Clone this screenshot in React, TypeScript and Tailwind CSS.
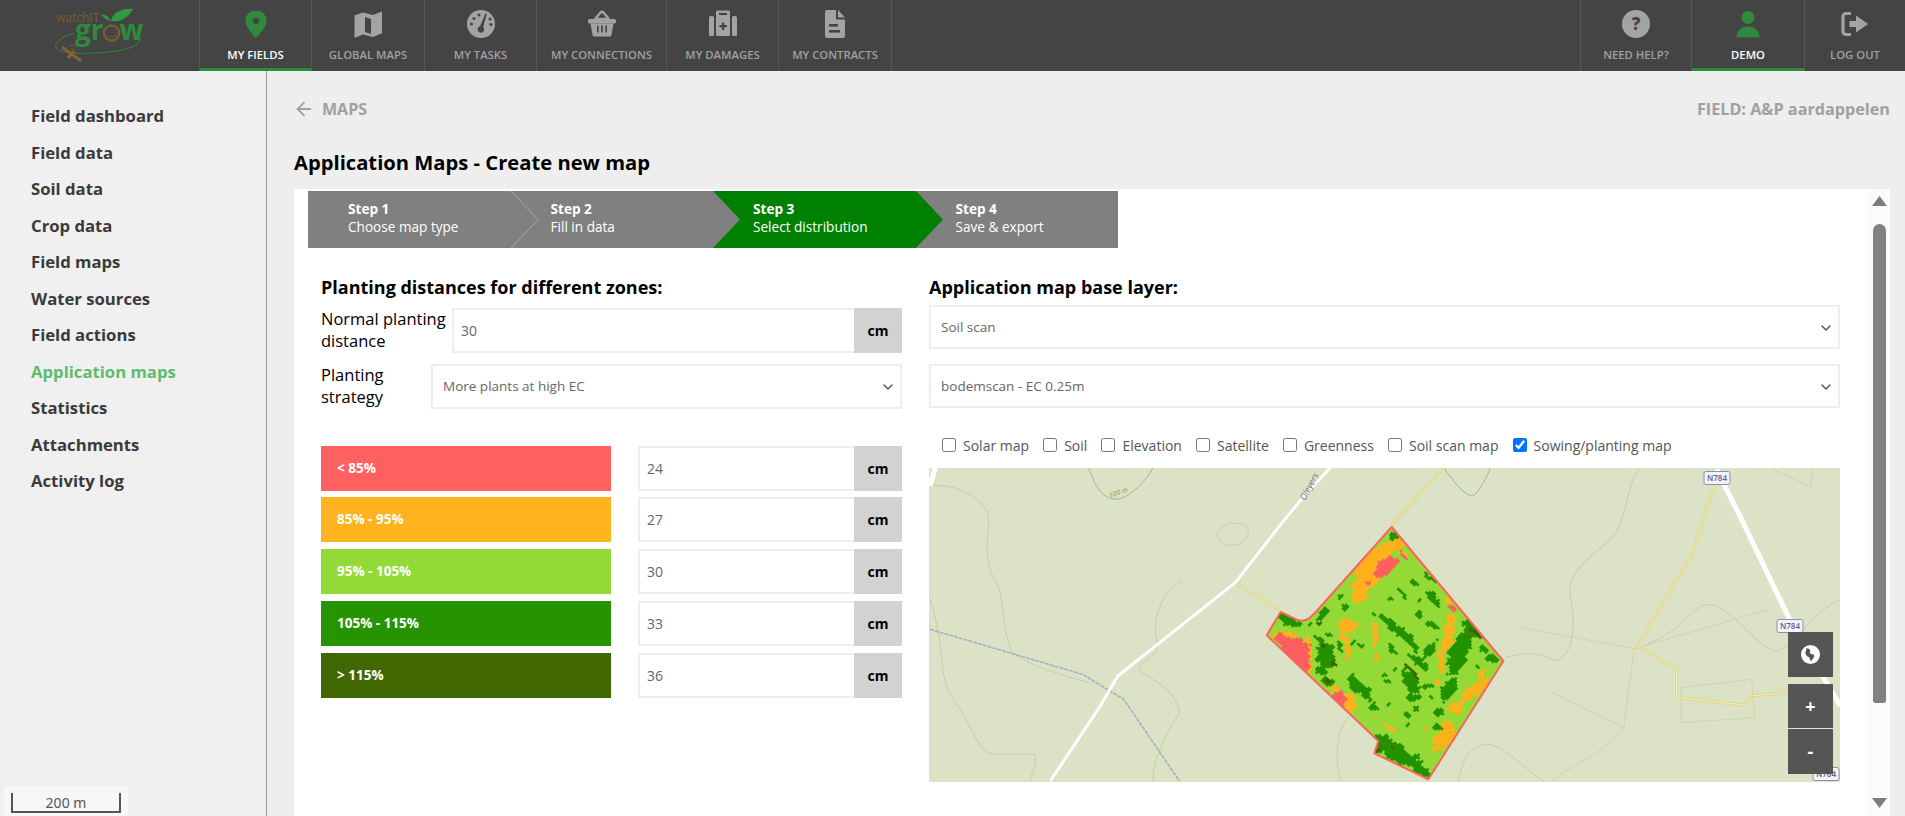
import React from "react";
import { ChevronDown, ArrowLeft } from "lucide-react";

const I = ({ children }: { children: React.ReactNode }) => (
  <svg viewBox="0 0 28 28" className="w-[28px] h-[28px] block" fill="currentColor" fillRule="evenodd">
    {children}
  </svg>
);
const D = "#444444";
const icons: Record<string, React.ReactNode> = {
  marker: <path d="M14 .5C8 .5 3.5 5 3.5 11c0 7 10.5 17 10.5 17s10.5-10 10.5-17C24.5 5 20 .5 14 .5zM14 14a3.2 3.2 0 1 1 0-6.4A3.2 3.2 0 0 1 14 14z" />,
  map: <path d="M0.5 5.5 L9 2.5 L19 5 L27.5 1.5 Q28.5 1.5 28.5 3 V23 L19 27 L9 24.5 L1.5 27.5 Q0 27.5 0.5 26 Z M11 7 V22 L17 24 V9 Z" />,
  gauge: (
    <>
      <circle cx="14" cy="14" r="14" />
      <path d="M18.5 3.5 L19.8 4 L16.2 17 A3.3 3.3 0 1 1 13 16.2 Z" fill={D} />
      <circle cx="7" cy="8.5" r="1.5" fill={D} />
      <circle cx="12" cy="5" r="1.5" fill={D} />
      <circle cx="4.5" cy="14" r="1.5" fill={D} />
      <circle cx="23" cy="9" r="1.5" fill={D} />
      <circle cx="24" cy="14.5" r="1.5" fill={D} />
    </>
  ),
  basket: (
    <>
      <path d="M14 1 L7 9 M14 1 L21 9 M7 9 H21" fill="none" stroke="currentColor" strokeWidth="2.4" strokeLinejoin="round" />
      <rect x="0" y="9" width="28" height="4.5" rx="1.6" />
      <path d="M2.5 13.5 H25.5 L23.5 25 Q23.3 26.5 21.5 26.5 H6.5 Q4.7 26.5 4.5 25 Z" />
      <rect x="9" y="15.5" width="1.6" height="7" fill={D} />
      <rect x="13.2" y="15.5" width="1.6" height="7" fill={D} />
      <rect x="17.4" y="15.5" width="1.6" height="7" fill={D} />
    </>
  ),
  medkit: (
    <>
      <rect x="0" y="6" width="5" height="20" rx="1.6" />
      <rect x="23" y="6" width="5" height="20" rx="1.6" />
      <rect x="7" y="0.5" width="14" height="25.5" rx="1.6" />
      <rect x="10" y="3" width="8" height="2" fill={D} />
      <path d="M13 12.5h2.2v2.6h2.6v2.2h-2.6v2.6H13v-2.6h-2.6v-2.2H13z" fill={D} />
    </>
  ),
  file: (
    <>
      <path d="M6 0H15V9.5H24V26a2 2 0 0 1-2 2H6a2 2 0 0 1-2-2V2a2 2 0 0 1 2-2z M17 0L24 7.5H17z" />
      <rect x="8" y="14" width="9" height="2.6" fill={D} />
      <rect x="8" y="20" width="11" height="2.6" fill={D} />
    </>
  ),
  help: (
    <>
      <circle cx="14" cy="14" r="14" />
      <text x="14" y="20" textAnchor="middle" fontSize="17" fontWeight="800" fill={D} fontFamily="Open Sans, sans-serif">?</text>
    </>
  ),
  user: (
    <>
      <circle cx="14" cy="7.5" r="6.5" />
      <path d="M2.5 27.5 C2.5 20 8 16.5 14 16.5 S25.5 20 25.5 27.5 Z" />
    </>
  ),
  logout: (
    <>
      <path d="M10 3.5H5a3 3 0 0 0-3 3V21.5a3 3 0 0 0 3 3H10" fill="none" stroke="currentColor" strokeWidth="3.2" />
      <path d="M8.5 11H15V5.5L27 14 15 22.5V17H8.5Z" />
    </>
  ),
};

const Tab = ({ label, icon, active, w }: { label: string; icon: string; active?: boolean; w: string }) => (
  <div className={`${w} h-full flex flex-col items-center border-r border-[#555555] pt-[10px] ${active ? "border-b-[3px] border-b-[#2e8b3d]" : ""}`}>
    <div className={active ? "text-[#2e8b3d]" : "text-[#a3a3a3]"}>
      <I>{icons[icon]}</I>
    </div>
    <div className={`mt-[9px] text-[11.3px] leading-[16px] font-semibold whitespace-nowrap ${active ? "text-white" : "text-[#a0a0a0]"}`}>{label}</div>
  </div>
);

const Logo = () => (
  <svg viewBox="0 0 200 71" className="w-[200px] h-[71px] block">
    <path d="M75 33C62 37 54 42 56 47c2 6 20 7 40 6 25-1 46-6 44-16" fill="none" stroke="#2e8b3d" strokeWidth="1" />
    <text x="56" y="21.5" fontSize="12" fill="#7a5c30" fontFamily="Open Sans, sans-serif">watchIT</text>
    <text x="75" y="40" fontSize="28" fontWeight="700" fill="#2e8b3d" fontFamily="Open Sans, sans-serif">gr</text>
    <circle cx="111.5" cy="33" r="7.5" fill="none" stroke="#7a5c30" strokeWidth="2.4" />
    <path d="M107 35q4 4 9 0" fill="none" stroke="#7a5c30" strokeWidth="1" />
    <text x="119.5" y="40" fontSize="28" fontWeight="700" fill="#2e8b3d" fontFamily="Open Sans, sans-serif">w</text>
    <path d="M111 21C112 13 122 8 133 9 129 17 120 23 111 21Z" fill="#2e9b42" />
    <path d="M110 21C107 20 103 17 101 15 105 14 109 16 110 21Z" fill="#2e9b42" />
    <path d="M62 47L81 61M68 58L74 51" stroke="#8a6430" strokeWidth="3" fill="none" />
    <path d="M68 47a7 7 0 0 1 11 3M71 49a4 4 0 0 1 5 2" stroke="#6d5a3a" strokeWidth="1" fill="none" />
  </svg>
);

const side = ["Field dashboard", "Field data", "Soil data", "Crop data", "Field maps", "Water sources", "Field actions", "Application maps", "Statistics", "Attachments", "Activity log"];

const Steps = () => {
  const steps = [
    ["Step 1", "Choose map type", "#808080"],
    ["Step 2", "Fill in data", "#808080"],
    ["Step 3", "Select distribution", "#008000"],
    ["Step 4", "Save & export", "#808080"],
  ];
  return (
    <div className="flex h-[57px] w-[810px] ml-[14px] mt-[2px]">
      {steps.map(([a, b, c], i) => (
        <div key={a} className="relative flex-1 pl-[40px] pt-[9px] text-white text-[13.6px] leading-[18px]" style={{ backgroundColor: c, zIndex: 10 - i }}>
          <div className="font-bold">{a}</div>
          <div>{b}</div>
          {i < 3 && (
            <svg viewBox="0 0 28 57" className="absolute left-full top-0 w-[28px] h-[57px]">
              <path d="M0 0L27 28.5 0 57Z" fill={c} />
              {i === 0 && <path d="M0 0L27 28.5 0 57" fill="none" stroke="#a8a8a8" strokeWidth="1" />}
            </svg>
          )}
        </div>
      ))}
    </div>
  );
};

const Cm = () => <div className="w-[48px] shrink-0 bg-[#d2d2d2] flex items-center justify-center text-[14px] font-bold text-black">cm</div>;
const NumInput = ({ v, cls }: { v: string; cls: string }) => (
  <div className={`flex h-[45px] ${cls}`}>
    <input readOnly value={v} className="flex-1 min-w-0 border-2 border-[#eeeeee] border-r-0 px-[7px] text-[14px] text-[#666666] bg-white outline-none" />
    <Cm />
  </div>
);
const Sel = ({ v, cls }: { v: string; cls: string }) => (
  <div className={`flex items-center justify-between border-2 border-[#eeeeee] pl-[10px] pr-[4px] text-[13.5px] text-[#666666] ${cls}`}>
    <span>{v}</span>
    <ChevronDown size={16} strokeWidth={2.2} className="text-[#555555]" />
  </div>
);

const zones = [
  ["< 85%", "#ff6161", "24", ""],
  ["85% - 95%", "#ffb31e", "27", "mt-[6px]"],
  ["95% - 105%", "#93da36", "30", "mt-[7px]"],
  ["105% - 115%", "#269400", "33", "mt-[7px]"],
  ["> 115%", "#406700", "36", "mt-[7px]"],
];

const layers = ["Solar map", "Soil", "Elevation", "Satellite", "Greenness", "Soil scan map", "Sowing/planting map"];

/* ---- field raster drawing ---- */
type B = [number, number, number, number, number, string];
const O = "#ffb31e", R = "#ff6161", G = "#269400", K = "#406700";
const blobs: B[] = [
  [395, 205, 100, 36, -55, O], [455, 135, 42, 18, -10, O], [360, 285, 24, 30, 0, O], [490, 160, 30, 6, 45, O], [420, 170, 40, 30, -40, O],
  [440, 195, 42, 22, -30, R], [380, 245, 8, 8, 0, R], [495, 165, 20, 4, 45, R],
  [323, 372, 30, 28, 0, O], [310, 415, 25, 9, 45, O], [325, 455, 8, 26, 0, O], [403, 400, 8, 38, -5, O], [415, 470, 6, 14, 0, O],
  [625, 400, 16, 68, 10, O], [605, 480, 9, 42, 0, O], [640, 320, 14, 10, 45, R], [625, 295, 12, 8, 45, O], [590, 545, 6, 14, 0, O],
  [700, 570, 66, 20, -40, O], [650, 620, 22, 20, 0, O], [610, 710, 28, 54, 30, O], [555, 685, 8, 8, 0, O], [725, 520, 22, 4, -40, O],
  [205, 460, 13, 66, -5, O], [120, 410, 34, 16, 0, O], [165, 445, 48, 40, 0, R], [185, 480, 28, 48, 0, R], [135, 425, 38, 22, 35, R], [150, 405, 20, 8, 0, O],
  [330, 605, 20, 36, -10, O], [300, 590, 20, 34, -20, R], [400, 650, 20, 3, 40, O], [450, 680, 26, 5, 35, O], [285, 560, 12, 8, 0, O],
  [460, 105, 20, 13, -40, G], [150, 360, 38, 15, 20, G], [250, 345, 34, 10, -50, G], [315, 320, 16, 9, 40, G], [300, 282, 11, 9, 0, G], [210, 372, 7, 7, 0, G], [265, 400, 15, 7, 0, G],
  [260, 465, 30, 38, 0, G], [240, 420, 28, 9, 45, G], [300, 435, 20, 7, 45, G], [360, 435, 11, 7, 40, G], [342, 428, 6, 6, 0, G], [245, 510, 16, 15, 0, G], [260, 545, 15, 15, 0, G],
  [360, 565, 50, 19, 40, G], [405, 612, 12, 15, 0, G], [335, 530, 17, 7, 40, G], [435, 545, 11, 7, 0, G], [433, 520, 11, 7, 0, G], [445, 610, 8, 8, 0, G], [462, 508, 6, 6, 0, G],
  [480, 395, 84, 14, 42, G], [565, 455, 44, 13, -60, G], [535, 480, 40, 11, 45, G], [575, 375, 22, 10, 45, G], [510, 545, 42, 22, 50, G], [520, 590, 30, 13, 0, G], [560, 555, 20, 8, 0, G],
  [455, 445, 24, 7, 45, G], [490, 280, 27, 6, 45, G], [520, 240, 15, 9, 0, G], [580, 295, 32, 10, 45, G], [570, 230, 27, 5, 45, G], [540, 335, 11, 11, 0, G], [450, 290, 7, 7, 0, G], [405, 338, 8, 7, 0, G],
  [660, 450, 28, 82, 20, G], [700, 385, 44, 24, 45, G], [625, 565, 18, 44, 25, G], [600, 635, 16, 17, 0, G], [590, 682, 15, 10, 0, G], [760, 475, 20, 12, 0, G], [735, 445, 15, 9, 40, G], [710, 505, 7, 7, 0, G],
  [500, 670, 8, 7, 0, G], [505, 640, 8, 8, 0, G], [530, 620, 11, 8, 0, G], [540, 300, 5, 5, 0, G], [440, 700, 7, 6, 0, G], [575, 595, 7, 6, 0, G],
  [480, 762, 88, 24, 30, G], [430, 712, 34, 9, 35, G], [540, 805, 30, 14, 25, G], [530, 765, 15, 14, 0, G],
  [285, 480, 14, 10, 30, K], [260, 545, 9, 9, 0, K], [253, 440, 9, 6, -40, K], [238, 373, 8, 6, 0, K], [515, 512, 30, 6, 42, K], [705, 400, 26, 8, 45, K], [420, 748, 10, 8, 0, K], [672, 408, 8, 6, 0, K], [462, 745, 5, 5, 0, K],
];
const buildPatches = () => {
  const out: Record<string, string[]> = {};
  const s = 7, a = (42 * Math.PI) / 180, c = Math.cos(a), n = Math.sin(a);
  for (let i = -90; i < 130; i++)
    for (let j = -90; j < 130; j++) {
      const u = i * s, v = j * s;
      const x = 430 + u * c - v * n, y = 450 + u * n + v * c;
      if (x < 60 || x > 800 || y < 60 || y > 850) continue;
      const noise = Math.abs(Math.sin(i * 12.9898 + j * 78.233) * 43758.5453) % 1;
      const wx = x + 4 * Math.sin(y / 9 + i * 0.7) + 3 * Math.sin(y / 23);
      const wy = y + 4 * Math.sin(x / 11 + j * 0.6) + 3 * Math.cos(x / 19);
      let col = "";
      for (const [bx, by, rx, ry, deg, cc] of blobs) {
        const t = (deg * Math.PI) / 180;
        const dx = wx - bx, dy = wy - by;
        const lx = dx * Math.cos(t) + dy * Math.sin(t), ly = -dx * Math.sin(t) + dy * Math.cos(t);
        if ((lx * lx) / (rx * rx) + (ly * ly) / (ry * ry) <= 0.65 + noise * 0.45) col = cc;
      }
      if (!col) continue;
      const h = s / 2;
      const p = (du: number, dv: number) => `${(x + du * c - dv * n).toFixed(1)} ${(y + du * n + dv * c).toFixed(1)}`;
      (out[col] ||= []).push(`M${p(-h, -h)}L${p(h, -h)}L${p(h, h)}L${p(-h, h)}Z`);
    }
  return out;
};
const patches = buildPatches();
const FIELD = "M455 78L790 480 565 835 403 757 415 720 80 403 122 333 175 358Q195 362 210 350L230 330Z";

const Contour = ({ d, c = "#c3cfad" }: { d: string; c?: string }) => <path d={d} fill="none" stroke={c} strokeWidth="1" vectorEffect="non-scaling-stroke" />;

const Shield = ({ x, y }: { x: number; y: number }) => (
  <g transform={`translate(${x} ${y})`}>
    <rect x="-13" y="-6.5" width="26" height="13" rx="2" fill="#f4f4f8" stroke="#8a90b0" strokeWidth="1" />
    <text x="0" y="3" textAnchor="middle" fontSize="8" fontWeight="600" fill="#5b6285" fontFamily="Open Sans, sans-serif">N784</text>
  </g>
);

const MapArt = () => (
  <svg viewBox="929 467 911 314" className="absolute inset-0 w-full h-full block">
    <rect x="929" y="467" width="911" height="314" fill="#dce2c6" />
    <g transform="translate(930 465) scale(.5869 .3333)">
      <Contour d="M270 5C280 50 290 100 320 100C345 90 370 40 380 5" c="#a3b688" />
      <Contour d="M0 60C40 50 90 90 100 150C100 220 90 280 110 340C130 400 120 480 140 560C170 600 230 630 270 650" />
      <Contour d="M0 400C30 560 10 620 40 700C80 800 80 860 110 865L178 865C185 890 170 930 170 950" />
      <Contour d="M515 172C490 180 480 210 500 235C530 250 550 210 540 185C535 172 525 172 515 172" />
      <Contour d="M430 345C400 370 380 440 385 510C400 580 340 590 360 620C390 650 420 680 425 740C400 810 380 880 380 945" />
      <Contour d="M875 5C890 40 910 90 925 90C935 80 950 30 955 5" c="#a3b688" />
      <Contour d="M1210 5C1190 40 1190 120 1170 200C1140 260 1090 300 1090 380C1100 470 1100 550 1070 585C1040 570 1030 550 980 575" />
      <Contour d="M715 750C690 790 690 890 700 945" />
      <Contour d="M900 945C910 870 920 840 950 835C980 840 1020 920 1045 945" />
      <Contour d="M1215 540C1300 480 1290 420 1330 415C1370 430 1400 530 1440 555C1470 550 1500 440 1551 400" />
      <Contour d="M1008 485L1200 548 1430 430M1060 680L1182 785 1200 548M1280 770L1405 755 1400 640 1280 665ZM1185 785C1150 860 1090 900 1060 945M1505 5L1500 62 1430 5" c="#cbd5b2" />
      <path d="M0 490L260 625 330 700 425 945" fill="none" stroke="#a9aec2" strokeWidth="1.6" strokeDasharray="4 1" vectorEffect="non-scaling-stroke" />
      <g fill="none" strokeLinejoin="round">
        <path d="M875 5L785 180M600 437L522 350M1335 60L1300 260 1205 540 1272 610V695L1390 718 1398 690 1462 680" stroke="#dfd58a" strokeWidth="3" vectorEffect="non-scaling-stroke" />
        <path d="M875 5L785 180M600 437L522 350M1335 60L1300 260 1205 540 1272 610V695L1390 718 1398 690 1462 680" stroke="#f5efc6" strokeWidth="1" vectorEffect="non-scaling-stroke" />
        <path d="M685 0L640 85 600 170 520 350 320 630 290 720 205 945" stroke="#ffffff" strokeWidth="3" vectorEffect="non-scaling-stroke" />
        <path d="M1340 10L1380 150 1470 480 1551 720M10 0L0 60" stroke="#ffffff" strokeWidth="5" vectorEffect="non-scaling-stroke" />
      </g>
    </g>
    <text transform="translate(1305 500) rotate(-62)" fontSize="9" fontStyle="italic" fill="#70757a" fontFamily="Open Sans, sans-serif">Oleyers</text>
    <text transform="translate(1110 497) rotate(-20)" fontSize="7" fontStyle="italic" fill="#7f9468" fontFamily="Open Sans, sans-serif">100 m</text>
    <Shield x={1717} y={477} />
    <Shield x={1790} y={625} />
    <Shield x={1826} y={773} />
    <g transform="translate(1240 500) scale(.33333)">
      <defs>
        <clipPath id="fieldclip">
          <path d={FIELD} />
        </clipPath>
      </defs>
      <path d={FIELD} fill="#93da36" />
      <g clipPath="url(#fieldclip)">
        {[O, R, G, K].map((c) => (
          <path key={c} d={(patches[c] || []).join("")} fill={c} stroke={c} strokeWidth=".6" />
        ))}
      </g>
      <path d={FIELD} fill="none" stroke="#ff6161" strokeWidth="6" strokeLinejoin="round" />
    </g>
  </svg>
);

const MapBtn = ({ children, cls }: { children: React.ReactNode; cls: string }) => (
  <div className={`w-[45px] h-[45px] bg-[#555555] flex items-center justify-center text-white font-bold text-[18px] ${cls}`}>{children}</div>
);

export default function App() {
  return (
    <div className="h-[816px] w-[1905px] overflow-hidden flex flex-col font-['Open_Sans',sans-serif] bg-[#eeeeee]">
      <header className="h-[71px] shrink-0 flex bg-[#444444]">
        <div className="w-[200px] border-r border-[#555555]">
          <Logo />
        </div>
        <Tab w="w-[112px]" label="MY FIELDS" icon="marker" active />
        <Tab w="w-[113px]" label="GLOBAL MAPS" icon="map" />
        <Tab w="w-[112px]" label="MY TASKS" icon="gauge" />
        <Tab w="w-[130px]" label="MY CONNECTIONS" icon="basket" />
        <Tab w="w-[112px]" label="MY DAMAGES" icon="medkit" />
        <Tab w="w-[113px]" label="MY CONTRACTS" icon="file" />
        <div className="flex-1 border-r border-[#555555]" />
        <Tab w="w-[111px]" label="NEED HELP?" icon="help" />
        <Tab w="w-[113px]" label="DEMO" icon="user" active />
        <div className="w-[100px] h-full flex flex-col items-center pt-[10px]">
          <div className="text-[#a3a3a3]">
            <I>{icons.logout}</I>
          </div>
          <div className="mt-[9px] text-[11.3px] leading-[16px] font-semibold text-[#a0a0a0]">LOG OUT</div>
        </div>
      </header>
      <div className="flex-1 flex min-h-0">
        <aside className="relative w-[267px] shrink-0 bg-[#f0f0f0] border-r border-[#999999] pt-[27px] pl-[31px]">
          {side.map((s) => (
            <div key={s} className={`h-[36.5px] leading-[36.5px] text-[16.7px] font-bold ${s === "Application maps" ? "text-[#5fbb6e]" : "text-[#3a3a3a]"}`}>
              {s}
            </div>
          ))}
          <div className="absolute left-[4px] bottom-0 w-[124px] h-[30px] bg-[#f7f7f7] pl-[7px] pt-[7px]">
            <div className="w-[110px] h-[20px] border-x-2 border-b-2 border-[#555555] text-center text-[14px] leading-[19px] text-[#555555] font-['Noto_Sans',sans-serif]">200 m</div>
          </div>
        </aside>
        <main className="flex-1 min-w-0 pl-[27px] pr-[15px] flex flex-col">
          <div className="h-[76px] shrink-0 flex items-center justify-between">
            <div className="flex items-center gap-[7px] text-[#a0a0a0] font-bold text-[16px]">
              <ArrowLeft size={22} strokeWidth={2} className="-ml-[1px]" />
              <span>MAPS</span>
            </div>
            <div className="text-[#a0a0a0] font-bold text-[16.2px]">FIELD: A&amp;P aardappelen</div>
          </div>
          <h1 className="h-[30px] leading-[30px] shrink-0 text-[20.2px] font-bold text-black">Application Maps - Create new map</h1>
          <div className="mt-[12px] flex-1 min-h-0 bg-white flex">
            <div className="flex-1 min-w-0">
              <Steps />
              <div className="flex pl-[27px] pt-[26px] gap-[27px]">
                <div className="w-[581px] shrink-0">
                  <h2 className="h-[26px] leading-[26px] text-[18px] font-bold text-black">Planting distances for different zones:</h2>
                  <div className="flex h-[45px] mt-[8px]">
                    <div className="w-[131px] shrink-0 text-[16.5px] leading-[22px] text-black">Normal planting distance</div>
                    <NumInput v="30" cls="flex-1" />
                  </div>
                  <div className="flex h-[45px] mt-[11px]">
                    <div className="w-[110px] shrink-0 text-[16.5px] leading-[22px] text-black">Planting strategy</div>
                    <Sel v="More plants at high EC" cls="flex-1" />
                  </div>
                  <div className="mt-[37px]">
                    {zones.map(([l, c, v, m]) => (
                      <div key={l} className={`flex h-[45px] ${m}`}>
                        <div className="w-[290px] shrink-0 flex items-center pl-[16px] text-white font-bold text-[13.5px]" style={{ backgroundColor: c }}>
                          {l}
                        </div>
                        <NumInput v={v} cls="w-[264px] ml-[27px]" />
                      </div>
                    ))}
                  </div>
                </div>
                <div className="w-[911px] shrink-0">
                  <h2 className="h-[26px] leading-[26px] text-[18px] font-bold text-black">Application map base layer:</h2>
                  <Sel v="Soil scan" cls="h-[44px] mt-[5px] pt-[1px]" />
                  <Sel v="bodemscan - EC 0.25m" cls="h-[44px] mt-[15px] pt-[1px]" />
                  <div className="mt-[27px] h-[20px] pl-[13px] flex items-center gap-[14.1px] text-[14px] text-[#555555]">
                    {layers.map((l) => (
                      <label key={l} className="flex items-center gap-[7px] whitespace-nowrap">
                        <input type="checkbox" readOnly checked={l === "Sowing/planting map"} className="w-[14px] h-[14px] m-0 accent-[#0075ff]" />
                        {l}
                      </label>
                    ))}
                  </div>
                  <div className="relative mt-[13px] h-[314px] overflow-hidden">
                    <MapArt />
                    <div className="absolute right-[7px] top-[164px] flex flex-col">
                      <MapBtn cls="">
                        <svg viewBox="0 0 20 20" className="w-[19px] h-[19px]" fill="currentColor">
                          <path d="M10 0a10 10 0 1 0 0 20 10 10 0 0 0 0-20zM5.5 3.5l3 .5 1.5 2-1 2 1.5 1.5 3 .5.5 2-2 3-1.5 2.5-1-2.5-1-2-2.5-1.5-1.5-3 1-3z" fillRule="evenodd" />
                        </svg>
                      </MapBtn>
                      <MapBtn cls="mt-[7px] border-b border-[#dddddd]">+</MapBtn>
                      <MapBtn cls="">-</MapBtn>
                    </div>
                  </div>
                </div>
              </div>
            </div>
            <div className="w-[23px] shrink-0 bg-[#fbfbfb] flex flex-col items-center pl-[2px] pt-[7px] pb-[8px]">
              <svg viewBox="0 0 15 10" className="w-[15px] h-[10px] shrink-0">
                <path d="M7.5 0L15 10H0Z" fill="#7d7d7d" />
              </svg>
              <div className="w-[13px] h-[479px] mt-[18px] bg-[#808080] rounded-t-[7px] rounded-b-[3px] shrink-0" />
              <div className="flex-1" />
              <svg viewBox="0 0 15 10" className="w-[15px] h-[10px] shrink-0">
                <path d="M0 0H15L7.5 10Z" fill="#7d7d7d" />
              </svg>
            </div>
          </div>
        </main>
      </div>
    </div>
  );
}
